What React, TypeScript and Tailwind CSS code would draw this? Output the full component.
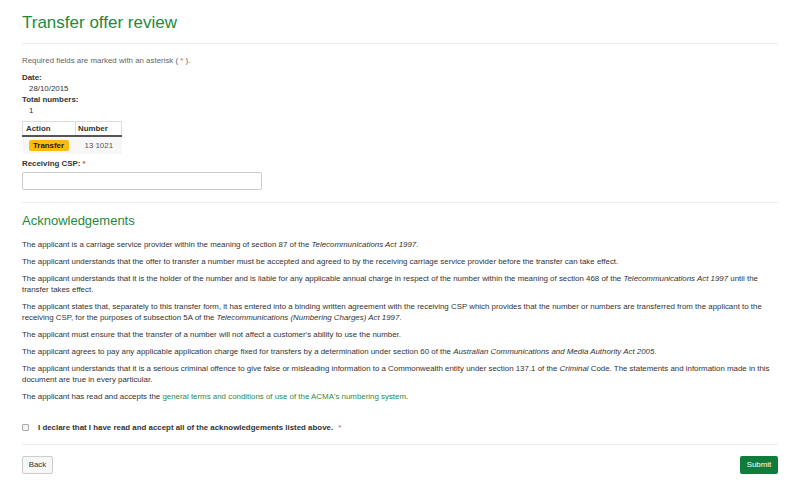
import React from "react";

export default function App() {
  return (
    <div
      className="w-[800px] h-[485px] bg-white text-[#333] overflow-hidden"
      style={{ fontFamily: '"Liberation Sans", Arial, sans-serif' }}
    >
      <div className="px-[22px] pt-[13px]">
        <h1 className="text-[17px] leading-[20px] text-[#1d8a3e] font-normal">Transfer offer review</h1>
        <hr className="mt-[10px] border-0 border-t border-[#eeeeee]" />
        <div className="text-[7.9px] leading-[11px]">
          <p className="mt-[11px] text-[#666]">
            Required fields are marked with an asterisk ( <span className="text-[#d9534f]">*</span> ).
          </p>
          <div className="mt-[6px]">
            <div className="font-bold">Date:</div>
            <div className="pl-[7px]">28/10/2015</div>
            <div className="font-bold">Total numbers:</div>
            <div className="pl-[7px]">1</div>
          </div>
          <table className="mt-[5px] border-collapse">
            <thead>
              <tr className="border border-[#ddd] border-b-2 border-b-[#555]">
                <th className="w-[53px] h-[14px] px-[3px] text-left font-bold border-r border-[#ddd]">Action</th>
                <th className="w-[46px] h-[14px] px-[2px] text-left font-bold">Number</th>
              </tr>
            </thead>
            <tbody>
              <tr className="bg-[#f7f7f7]">
                <td className="h-[18px] px-[6px]">
                  <span className="inline-block w-[40px] h-[11px] leading-[11px] text-center rounded-[2px] bg-[#fbbc0b] font-bold text-[#222]">
                    Transfer
                  </span>
                </td>
                <td className="h-[18px] pl-[9px] text-[#555]">13 1021</td>
              </tr>
            </tbody>
          </table>
          <div className="mt-[4px] font-bold">
            Receiving CSP: <span className="text-[#d9534f]">*</span>
          </div>
          <div className="mt-[3px] w-[240px] h-[18px] border border-[#ccc] rounded-[2px] bg-white" />
        </div>
        <hr className="mt-[12px] border-0 border-t border-[#eeeeee]" />
        <h2 className="mt-[10px] text-[13px] leading-[16px] text-[#1d8a3e] font-normal">Acknowledgements</h2>
        <div className="mt-[10px] text-[7.9px] leading-[11px] text-[#333] flex flex-col gap-[6px]">
          <p>
            The applicant is a carriage service provider within the meaning of section 87 of the{" "}
            <i>Telecommunications Act 1997</i>.
          </p>
          <p>
            The applicant understands that the offer to transfer a number must be accepted and agreed to by the receiving
            carriage service provider before the transfer can take effect.
          </p>
          <p>
            The applicant understands that it is the holder of the number and is liable for any applicable annual charge in
            respect of the number within the meaning of section 468 of the <i>Telecommunications Act 1997</i> until the
            transfer takes effect.
          </p>
          <p>
            The applicant states that, separately to this transfer form, it has entered into a binding written agreement with
            the receiving CSP which provides that the number or numbers are transferred from the applicant to the receiving
            CSP, for the purposes of subsection 5A of the <i>Telecommunications (Numbering Charges) Act 1997</i>.
          </p>
          <p>The applicant must ensure that the transfer of a number will not affect a customer's ability to use the number.</p>
          <p>
            The applicant agrees to pay any applicable application charge fixed for transfers by a determination under section
            60 of the <i>Australian Communications and Media Authority Act 2005</i>.
          </p>
          <p>
            The applicant understands that it is a serious criminal offence to give false or misleading information to a
            Commonwealth entity under section 137.1 of the <i>Criminal</i> Code. The statements and information made in this
            document are true in every particular.
          </p>
          <p>
            The applicant has read and accepts the{" "}
            <span className="text-[#2a8a4a]">general terms and conditions of use of the ACMA's numbering system</span>.
          </p>
        </div>
        <div className="mt-[20px] flex items-center text-[7.9px] leading-[11px] font-bold text-[#333]">
          <span className="w-[7px] h-[7px] border border-[#aaa] rounded-[1px] bg-[#f3f3f3]" />
          <span className="ml-[9px]">I declare that I have read and accept all of the acknowledgements listed above.</span>
          <span className="ml-[5px] text-[#d9534f] font-normal">*</span>
        </div>
        <hr className="mt-[11px] border-0 border-t border-[#eeeeee]" />
        <div className="mt-[11px] flex justify-between items-center text-[7.9px]">
          <button className="w-[31px] h-[18px] border border-[#ccc] rounded-[2px] bg-[#f7f7f7] text-[#333]">Back</button>
          <button className="w-[38px] h-[18px] rounded-[2px] bg-[#107c3c] text-white">Submit</button>
        </div>
      </div>
    </div>
  );
}
